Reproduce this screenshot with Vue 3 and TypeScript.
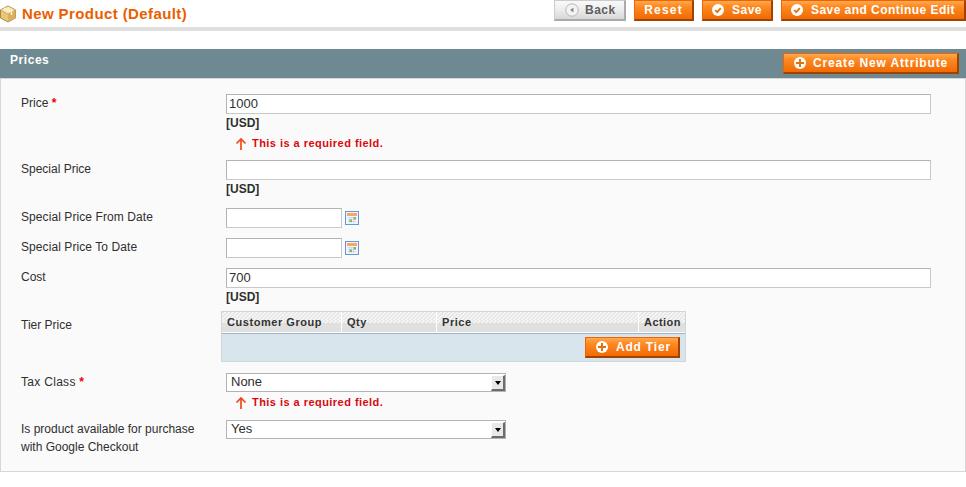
<script setup lang="ts">
const plus = 'M6 3h2v3h3v2H8v3H6V8H3V6h3z'
</script>

<template>
  <div class="page">
    <header class="head">
      <div class="title">
        <svg class="box" width="18" height="18" viewBox="0 0 18 18">
          <path d="M9 1l7.500 4v8L9 17l-7.500-4V5z" fill="#e9c779" stroke="#a98a4c" stroke-width="1" />
          <path d="M1.500 5L9 9l7.500-4L9 1z" fill="#fbe9b8" stroke="#b59a5f" stroke-width=".7" />
          <path d="M9 9v8l7.500-4V5z" fill="#dcb05c" />
          <path d="M5 3l7.500 4v3" fill="none" stroke="#fff3cf" stroke-width="1.400" />
        </svg>
        <h1>New Product (Default)</h1>
      </div>
      <div class="actions">
        <button class="btn back" type="button">
          <svg width="14" height="14" viewBox="0 0 14 14"><circle cx="7" cy="7" r="6.200" fill="#f4f4f4" stroke="#b5b5b5" /><path d="M8.500 4.500v5L5 7z" fill="#8a8a8a" /></svg>
          <span>Back</span>
        </button>
        <button class="btn reset" type="button"><span>Reset</span></button>
        <button class="btn icon save" type="button">
          <svg width="14" height="14" viewBox="0 0 14 14"><circle cx="7" cy="7" r="6" fill="#fff" /><path d="M4.200 7l2 2.200 3.600-4" fill="none" stroke="#e3700f" stroke-width="1.800" /></svg>
          <span>Save</span>
        </button>
        <button class="btn icon save-edit" type="button">
          <svg width="14" height="14" viewBox="0 0 14 14"><circle cx="7" cy="7" r="6" fill="#fff" /><path d="M4.200 7l2 2.200 3.600-4" fill="none" stroke="#e3700f" stroke-width="1.800" /></svg>
          <span>Save and Continue Edit</span>
        </button>
      </div>
    </header>

    <section class="panel">
      <div class="panel-head">
        <h4>Prices</h4>
        <button class="btn create" type="button">
          <svg width="14" height="14" viewBox="0 0 14 14"><circle cx="7" cy="7" r="6" fill="#fff" /><path :d="plus" fill="#e3700f" /></svg>
          <span>Create New Attribute</span>
        </button>
      </div>

      <div class="fieldset">
        <div class="row r-price">
          <label>Price <em>*</em></label>
          <div class="value">
            <input class="text" value="1000" />
            <strong class="cur">[USD]</strong>
            <div class="err">
              <svg width="12" height="13" viewBox="0 0 12 13"><path d="M6 13V2.500M1.500 6.500L6 2l4.500 4.500" fill="none" stroke="#ee4a1c" stroke-width="1.700" /></svg>
              <span>This is a required field.</span>
            </div>
          </div>
        </div>

        <div class="row r-special">
          <label>Special Price</label>
          <div class="value">
            <input class="text" />
            <strong class="cur">[USD]</strong>
          </div>
        </div>

        <div class="row r-date">
          <label class="wide-label">Special Price From Date</label>
          <div class="value date">
            <input class="text short" />
            <svg class="cal" width="14" height="14" viewBox="0 0 14 14">
              <rect x=".5" y=".5" width="13" height="13" fill="#f1f5fb" stroke="#6a97d4" />
              <rect x="2" y="2" width="10" height="3" fill="#f9a66a" />
              <path d="M3 6.500h8M3 8.500h8M3 10.500h8M4.500 6v6M6.500 6v6M8.500 6v6" stroke="#c3d3e8" stroke-width=".7" />
              <rect x="8.500" y="6" width="2.500" height="2.500" fill="#7dbb6a" />
              <rect x="4.500" y="8.500" width="2.500" height="2.500" fill="#7dbb6a" />
            </svg>
          </div>
        </div>

        <div class="row r-date">
          <label class="wide-label">Special Price To Date</label>
          <div class="value date">
            <input class="text short" />
            <svg class="cal" width="14" height="14" viewBox="0 0 14 14">
              <rect x=".5" y=".5" width="13" height="13" fill="#f1f5fb" stroke="#6a97d4" />
              <rect x="2" y="2" width="10" height="3" fill="#f9a66a" />
              <path d="M3 6.500h8M3 8.500h8M3 10.500h8M4.500 6v6M6.500 6v6M8.500 6v6" stroke="#c3d3e8" stroke-width=".7" />
              <rect x="8.500" y="6" width="2.500" height="2.500" fill="#7dbb6a" />
              <rect x="4.500" y="8.500" width="2.500" height="2.500" fill="#7dbb6a" />
            </svg>
          </div>
        </div>

        <div class="row r-special">
          <label>Cost</label>
          <div class="value">
            <input class="text" value="700" />
            <strong class="cur">[USD]</strong>
          </div>
        </div>

        <div class="row r-tier">
          <label>Tier Price</label>
          <div class="tier">
            <div class="tier-head">
              <div class="th c1">Customer Group</div>
              <div class="th c2">Qty</div>
              <div class="th c3">Price</div>
              <div class="th c4">Action</div>
            </div>
            <div class="tier-foot">
              <button class="btn add" type="button">
                <svg width="14" height="14" viewBox="0 0 14 14"><circle cx="7" cy="7" r="6" fill="#fff" /><path :d="plus" fill="#e3700f" /></svg>
                <span>Add Tier</span>
              </button>
            </div>
          </div>
        </div>

        <div class="row r-tax">
          <label class="tax-label">Tax Class <em>*</em></label>
          <div class="value">
            <div class="select">
              <span>None</span>
              <i class="arrow"></i>
            </div>
            <div class="err tax-err">
              <svg width="12" height="13" viewBox="0 0 12 13"><path d="M6 13V2.500M1.500 6.500L6 2l4.500 4.500" fill="none" stroke="#ee4a1c" stroke-width="1.700" /></svg>
              <span>This is a required field.</span>
            </div>
          </div>
        </div>

        <div class="row r-google">
          <label>Is product available for purchase<br />with Google Checkout</label>
          <div class="value">
            <div class="select">
              <span>Yes</span>
              <i class="arrow"></i>
            </div>
          </div>
        </div>
      </div>
    </section>
  </div>
</template>

<style scoped>
.page {
  width: 966px;
  height: 487px;
  overflow: hidden;
  background: #fff;
  font: 12px/18px "Liberation Sans", Arial, sans-serif;
  color: #2f2f2f;
}
.head {
  display: flex;
  justify-content: space-between;
  height: 27px;
  border-bottom: 4px solid #dfdfdf;
}
.title {
  display: flex;
  align-items: center;
  gap: 5px;
  height: 27px;
}
.box {
  flex: none;
  margin-left: -1px;
}
h1 {
  margin: 0;
  font-size: 15px;
  line-height: 18px;
  font-weight: 700;
  color: #eb5e00;
  letter-spacing: .4px;
}
.actions {
  display: flex;
  gap: 8px;
  align-items: flex-start;
}
.btn {
  display: flex;
  align-items: center;
  height: 21px;
  box-sizing: border-box;
  padding: 0 7px;
  border-style: solid;
  border-width: 1px 2px 2px 1px;
  border-color: #ed6502 #a04300 #a04300 #ed6502;
  background: linear-gradient(#fda94f, #ff8a22 30%, #f77c16 60%, #f26a05);
  color: #fff;
  font: 700 12px/16px "Liberation Sans", Arial, sans-serif;
  white-space: nowrap;
  cursor: pointer;
}
.btn svg {
  flex: none;
}
.back {
  width: 72px;
  padding-left: 10px;
  gap: 6px;
  letter-spacing: .5px;
  border-color: #ccc #aaa #aaa #ccc;
  background: linear-gradient(#fafafa, #ececec 50%, #d8d8d8);
  color: #5f5f5f;
}
.reset {
  width: 60px;
  justify-content: center;
  padding: 0;
  letter-spacing: 1.2px;
}
.icon {
  gap: 7px;
  padding-left: 8px;
}
.save {
  width: 71px;
  letter-spacing: .5px;
}
.save-edit {
  width: 185px;
  letter-spacing: .45px;
}
.panel-head {
  display: flex;
  justify-content: space-between;
  align-items: flex-start;
  height: 29px;
  margin-top: 18px;
  padding: 4px 7px 0 10px;
  background: #6f8992;
  box-sizing: border-box;
}
h4 {
  margin: 0;
  color: #fff;
  font-size: 12px;
  line-height: 14px;
  font-weight: 700;
  letter-spacing: .55px;
}
.create {
  width: 176px;
  padding-left: 9px;
  gap: 6px;
  letter-spacing: .84px;
}
.fieldset {
  height: 394px;
  box-sizing: border-box;
  padding: 15px 0 0 20px;
  background: #fafafa;
  border: 1px solid #d6d6d6;
}
.row {
  display: grid;
  grid-template-columns: 205px 705px;
}
label {
  line-height: 18px;
  color: #2f2f2f;
}
.wide-label {
  letter-spacing: .08px;
}
.tax-label {
  letter-spacing: .3px;
}
em {
  font-style: normal;
  font-weight: 700;
  color: #eb0000;
}
.value {
  display: flex;
  flex-direction: column;
  align-items: flex-start;
}
.date {
  flex-direction: row;
  align-items: flex-start;
  gap: 3px;
}
.text {
  width: 705px;
  height: 20px;
  box-sizing: border-box;
  margin: 0;
  padding: 0 2px 2px;
  border: 1px solid #b3b3b3;
  border-bottom-color: #c8c8c8;
  border-right-color: #c8c8c8;
  background: #fff;
  font: 13px/16px "Liberation Sans", Arial, sans-serif;
  color: #2f2f2f;
  outline: none;
}
.short {
  width: 116px;
}
.cal {
  flex: none;
  margin-top: 3px;
}
.cur {
  line-height: 18px;
  height: 18px;
  color: #2f2f2f;
}
.err {
  display: flex;
  align-items: center;
  gap: 5px;
  height: 13px;
  margin: 5px 0 0 9px;
  color: #d8090f;
  font-size: 11px;
  line-height: 13px;
  font-weight: 700;
  letter-spacing: .46px;
}
.r-price {
  height: 66px;
}
.r-special {
  height: 48px;
}
.r-date {
  height: 30px;
}
.r-tier {
  height: 62px;
  margin-top: -5px;
  grid-template-columns: 200px 465px;
}
.r-tier label {
  padding-top: 5px;
}
.tier {
  height: 51px;
  box-sizing: border-box;
  border: 1px solid #cfd7d8;
}
.tier-head {
  display: grid;
  grid-template-columns: 120px 95px 202px 46px;
  height: 21px;
  border-bottom: 1px solid #a3b3c7;
  box-sizing: content-box;
  background:
    linear-gradient(135deg, #e6e6e6 25%, #f6f6f6 25% 50%, #e6e6e6 50% 75%, #f6f6f6 75%) 0 0 / 4px 4px repeat-x,
    linear-gradient(135deg, #e6e6e6 25%, #f6f6f6 25% 50%, #e6e6e6 50% 75%, #f6f6f6 75%) 0 4px / 4px 4px repeat-x,
    linear-gradient(135deg, #e6e6e6 25%, #f6f6f6 25% 50%, #e6e6e6 50% 75%, #f6f6f6 75%) 0 8px / 4px 3px repeat-x,
    #e0e0e0;
}
.th {
  padding-left: 5px;
  font-weight: 700;
  font-size: 11px;
  line-height: 21px;
  letter-spacing: .55px;
  color: #333;
  border-right: 1px solid #fff;
  border-bottom: 1px solid #fff;
  box-sizing: border-box;
  height: 21px;
  white-space: nowrap;
}
.c4 {
  border-right: 0;
  letter-spacing: .45px;
}
.tier-foot {
  display: flex;
  justify-content: flex-end;
  align-items: flex-start;
  height: 27px;
  padding: 3px 5px 0 0;
  box-sizing: border-box;
  background: #d8e5ec;
}
.add {
  width: 95px;
  padding-left: 9px;
  gap: 7px;
  letter-spacing: .8px;
}
.r-tax {
  height: 47px;
}
.select {
  display: flex;
  align-items: center;
  justify-content: space-between;
  width: 280px;
  height: 19px;
  box-sizing: border-box;
  padding: 0 0 0 4px;
  background: #fff;
  border: 1px solid #b3b3b3;
  font-size: 13px;
  line-height: 15px;
}
.select span {
  margin-top: -2px;
}
.arrow {
  display: block;
  position: relative;
  width: 14px;
  height: 16px;
  box-sizing: border-box;
  background: #e8e8e8;
  border-right: 2px solid #6c6c6c;
  border-bottom: 2px solid #6c6c6c;
  border-left: 1px solid #fff;
  border-top: 1px solid #fff;
}
.arrow::after {
  content: "";
  position: absolute;
  left: 3px;
  top: 5px;
  border-left: 3px solid transparent;
  border-right: 3px solid transparent;
  border-top: 4px solid #000;
}
.tax-err {
  margin-top: 4px;
}
</style>
